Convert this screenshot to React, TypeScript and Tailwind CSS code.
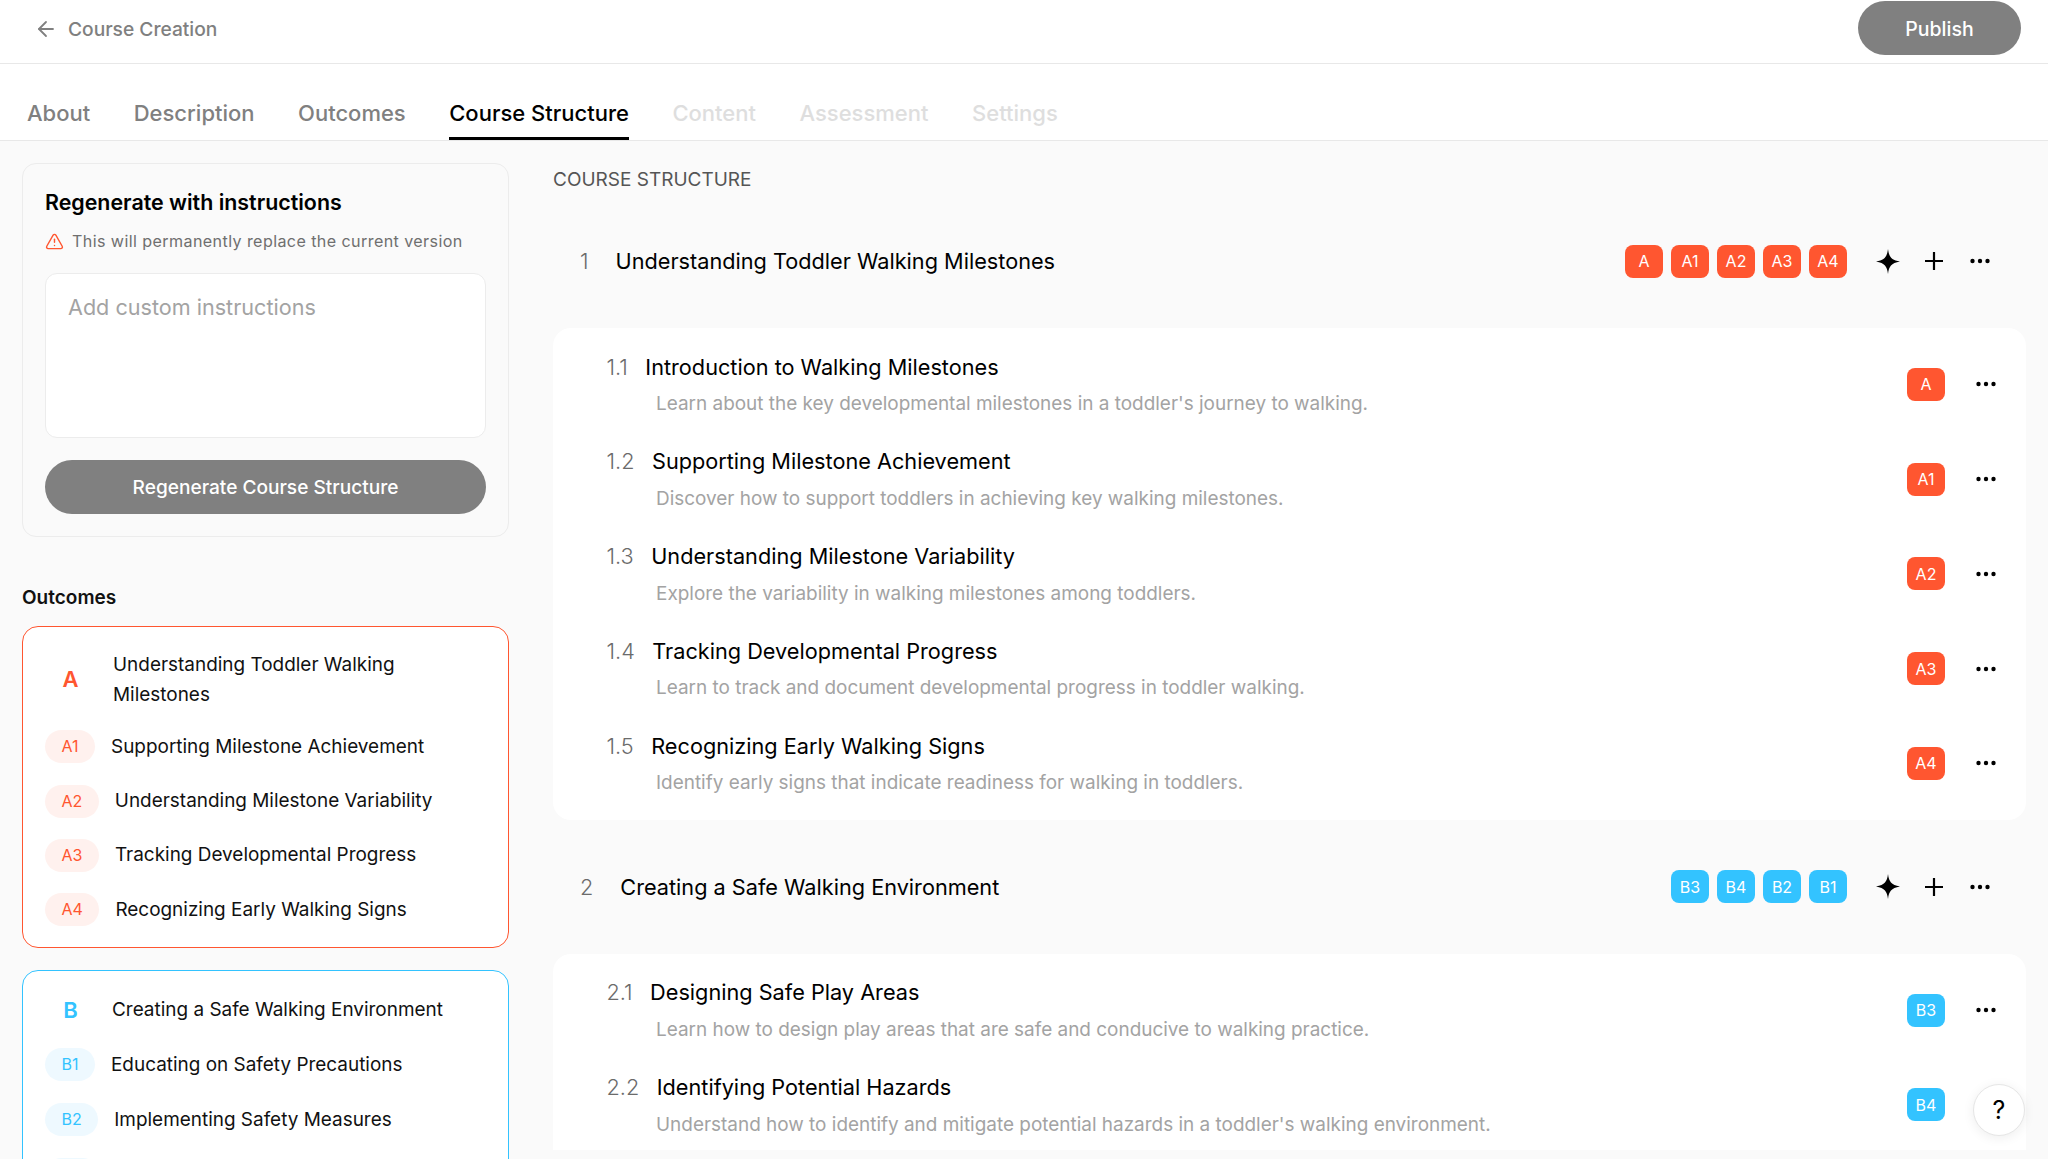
import { ArrowLeft, TriangleAlert } from "lucide-react";

const orange = "bg-[#ff5630]";
const blue = "bg-[#33c3ff]";

function Dots() {
  return (
    <svg width="22" height="6" viewBox="0 0 22 6" className="shrink-0 text-black">
      <circle cx="3.5" cy="3" r="2.2" fill="currentColor" />
      <circle cx="11" cy="3" r="2.2" fill="currentColor" />
      <circle cx="18.5" cy="3" r="2.2" fill="currentColor" />
    </svg>
  );
}

function Sparkle() {
  return (
    <svg width="24" height="25" viewBox="0 0 24 25" className="shrink-0">
      <path d="M12 0C13 7.5 15 11 24 12.5C15 14 13 17.5 12 25C11 17.5 9 14 0 12.5C9 11 11 7.5 12 0Z" fill="#000" />
    </svg>
  );
}

function Plus() {
  return (
    <svg width="18" height="18" viewBox="0 0 18 18" className="shrink-0">
      <path d="M9 0.5V17.5M0.5 9H17.5" stroke="#000" strokeWidth="2.2" strokeLinecap="round" />
    </svg>
  );
}

function Badge({ label, tone }: { label: string; tone: string }) {
  return (
    <span className={`flex h-[33px] w-[38px] shrink-0 items-center justify-center rounded-[8px] text-[16px] text-white ${tone}`}>
      {label}
    </span>
  );
}

function Item({ no, title, desc, badge, tone }: { no: string; title: string; desc: string; badge: string; tone: string }) {
  return (
    <div className="flex h-[94.75px] shrink-0 items-center justify-between pl-[53.5px] pr-[29px]">
      <div className="flex flex-col gap-[7.5px]">
        <div className="flex items-center gap-[17.5px] text-[21.7px] leading-[30px]">
          <span className="font-light text-[#6b6b6b]">{no}</span>
          <span className="text-black">{title}</span>
        </div>
        <p className="pl-[49.5px] text-[18.95px] leading-[30px] text-[#a3a3a3]">{desc}</p>
      </div>
      <div className="mb-[2px] flex items-center gap-[30px]">
        <Badge label={badge} tone={tone} />
        <Dots />
      </div>
    </div>
  );
}

function SectionHead({ no, title, badges, tone }: { no: string; title: string; badges: string[]; tone: string }) {
  return (
    <div className="flex h-[134px] shrink-0 items-center justify-between pl-[27px] pr-[35px]">
      <div className="flex items-center gap-[27px] text-[21.7px] leading-[32px]">
        <span className="font-light text-[#6b6b6b]">{no}</span>
        <span className="text-black">{title}</span>
      </div>
      <div className="flex items-center">
        <div className="flex gap-[8px]">
          {badges.map((b) => (
            <Badge key={b} label={b} tone={tone} />
          ))}
        </div>
        <div className="ml-[29px] flex items-center">
          <Sparkle />
          <span className="ml-[25px]">
            <Plus />
          </span>
          <span className="ml-[26px] flex">
            <Dots />
          </span>
        </div>
      </div>
    </div>
  );
}

function OutcomeRow({ code, text, pill, color }: { code: string; text: string; pill: string; color: string }) {
  return (
    <div className="flex h-[33px] items-center gap-[16px]">
      <span className={`flex h-[33px] items-center rounded-full px-[16.5px] pb-[1px] text-[16px] ${pill} ${color}`}>{code}</span>
      <span className="text-[18.95px] leading-[30px] text-[#111]">{text}</span>
    </div>
  );
}

export default function App() {
  return (
    <div className="flex h-[1159px] flex-col overflow-hidden bg-[#fafafa] font-['Inter',sans-serif]">
      <header className="flex h-[64px] shrink-0 items-center justify-between border-b border-[#e8e8e8] bg-white pl-[34px] pr-[27px]">
        <div className="mb-[5px] flex items-center gap-[10px] text-[#808080]">
          <ArrowLeft size={24} strokeWidth={1.8} />
          <span className="text-[19.2px] font-medium">Course Creation</span>
        </div>
        <button className="mb-[8px] flex h-[54px] w-[163px] items-center justify-center rounded-full bg-[#808080] pt-[4px] text-[19.5px] font-medium text-white">
          Publish
        </button>
      </header>

      <nav className="flex h-[77px] shrink-0 items-end gap-[43.5px] border-b border-[#e8e8e8] bg-white pl-[27px] text-[22px] font-medium leading-[30px]">
        <span className="pb-[12px] text-[#808080]">About</span>
        <span className="pb-[12px] text-[#808080]">Description</span>
        <span className="pb-[12px] text-[#808080]">Outcomes</span>
        <span className="border-b-[3px] border-black pb-[9px] text-black">Course Structure</span>
        <span className="pb-[12px] text-[#dedede]">Content</span>
        <span className="pb-[12px] text-[#dedede]">Assessment</span>
        <span className="pb-[12px] text-[#dedede]">Settings</span>
      </nav>

      <main className="flex min-h-0 flex-1 gap-[44px] px-[22px] pt-[22px]">
        <aside className="flex w-[487px] shrink-0 flex-col">
          <section className="flex h-[374px] shrink-0 flex-col rounded-[14px] border border-[#ececec] bg-[#fafafa] px-[22px] pt-[23px]">
            <h2 className="text-[21.4px] font-semibold leading-[30px] text-black">Regenerate with instructions</h2>
            <div className="mt-[9px] flex h-[30px] items-center gap-[8px]">
              <TriangleAlert size={19} strokeWidth={1.8} className="text-[#ff5630]" />
              <span className="text-[16.1px] tracking-[0.4px] text-[#6f6f6f]">This will permanently replace the current version</span>
            </div>
            <textarea
              readOnly
              placeholder="Add custom instructions"
              className="mt-[17px] h-[165px] w-full resize-none rounded-[12px] border border-[#ececec] bg-white px-[22px] py-[18px] text-[21.6px] leading-[30px] outline-none placeholder:text-[#a3a3a3]"
            />
            <button className="mt-[22px] flex h-[54px] items-center justify-center rounded-full bg-[#808080] text-[19.1px] font-medium text-white">
              Regenerate Course Structure
            </button>
          </section>

          <h3 className="mt-[47px] text-[19px] font-semibold leading-[28px] text-[#111]">Outcomes</h3>

          <section className="mt-[14px] flex shrink-0 flex-col gap-[21.3px] rounded-[16px] border-[1.5px] border-[#ff5630] bg-white px-[22px] pb-[21px] pt-[23px]">
            <div className="flex items-center gap-[17px]">
              <span className="w-[51px] shrink-0 text-center text-[22px] font-semibold text-[#ff5630]">A</span>
              <span className="text-[18.95px] leading-[29.5px] text-[#111]">Understanding Toddler Walking Milestones</span>
            </div>
            <OutcomeRow code="A1" text="Supporting Milestone Achievement" pill="bg-[#fff1ee]" color="text-[#ff5630]" />
            <OutcomeRow code="A2" text="Understanding Milestone Variability" pill="bg-[#fff1ee]" color="text-[#ff5630]" />
            <OutcomeRow code="A3" text="Tracking Developmental Progress" pill="bg-[#fff1ee]" color="text-[#ff5630]" />
            <OutcomeRow code="A4" text="Recognizing Early Walking Signs" pill="bg-[#fff1ee]" color="text-[#ff5630]" />
          </section>

          <section className="mt-[22px] flex shrink-0 flex-col gap-[21.7px] rounded-[16px] border-[1.5px] border-[#33c3ff] bg-white px-[22px] pb-[21px] pt-[22.5px]">
            <div className="flex items-center gap-[16px]">
              <span className="w-[51px] shrink-0 text-center text-[22px] font-semibold text-[#33c3ff]">B</span>
              <span className="text-[18.95px] leading-[30px] text-[#111]">Creating a Safe Walking Environment</span>
            </div>
            <OutcomeRow code="B1" text="Educating on Safety Precautions" pill="bg-[#eef9ff]" color="text-[#33c3ff]" />
            <OutcomeRow code="B2" text="Implementing Safety Measures" pill="bg-[#eef9ff]" color="text-[#33c3ff]" />
            <OutcomeRow code="" text="" pill="w-[54px] bg-[#eef9ff]" color="text-[#33c3ff]" />
          </section>
        </aside>

        <div className="flex h-[987px] min-w-0 flex-1 flex-col overflow-hidden">
          <h2 className="h-[31px] shrink-0 text-[19px] leading-[33px] text-[#555]">COURSE STRUCTURE</h2>
          <SectionHead no="1" title="Understanding Toddler Walking Milestones" badges={["A", "A1", "A2", "A3", "A4"]} tone={orange} />
          <div className="flex shrink-0 flex-col rounded-[18px] bg-white pb-[8px] pt-[10px]">
            <Item no="1.1" title="Introduction to Walking Milestones" desc="Learn about the key developmental milestones in a toddler's journey to walking." badge="A" tone={orange} />
            <Item no="1.2" title="Supporting Milestone Achievement" desc="Discover how to support toddlers in achieving key walking milestones." badge="A1" tone={orange} />
            <Item no="1.3" title="Understanding Milestone Variability" desc="Explore the variability in walking milestones among toddlers." badge="A2" tone={orange} />
            <Item no="1.4" title="Tracking Developmental Progress" desc="Learn to track and document developmental progress in toddler walking." badge="A3" tone={orange} />
            <Item no="1.5" title="Recognizing Early Walking Signs" desc="Identify early signs that indicate readiness for walking in toddlers." badge="A4" tone={orange} />
          </div>
          <SectionHead no="2" title="Creating a Safe Walking Environment" badges={["B3", "B4", "B2", "B1"]} tone={blue} />
          <div className="flex shrink-0 flex-col rounded-t-[18px] bg-white pt-[10px]">
            <Item no="2.1" title="Designing Safe Play Areas" desc="Learn how to design play areas that are safe and conducive to walking practice." badge="B3" tone={blue} />
            <Item no="2.2" title="Identifying Potential Hazards" desc="Understand how to identify and mitigate potential hazards in a toddler's walking environment." badge="B4" tone={blue} />
          </div>
        </div>
      </main>

      <button className="absolute left-[1973px] top-[1084px] flex h-[52px] w-[52px] items-center justify-center rounded-full border border-[#e6e6e6] bg-white pt-[2px] text-[25px] text-black shadow-[0_2px_12px_rgba(0,0,0,0.07)]">
        ?
      </button>
    </div>
  );
}
